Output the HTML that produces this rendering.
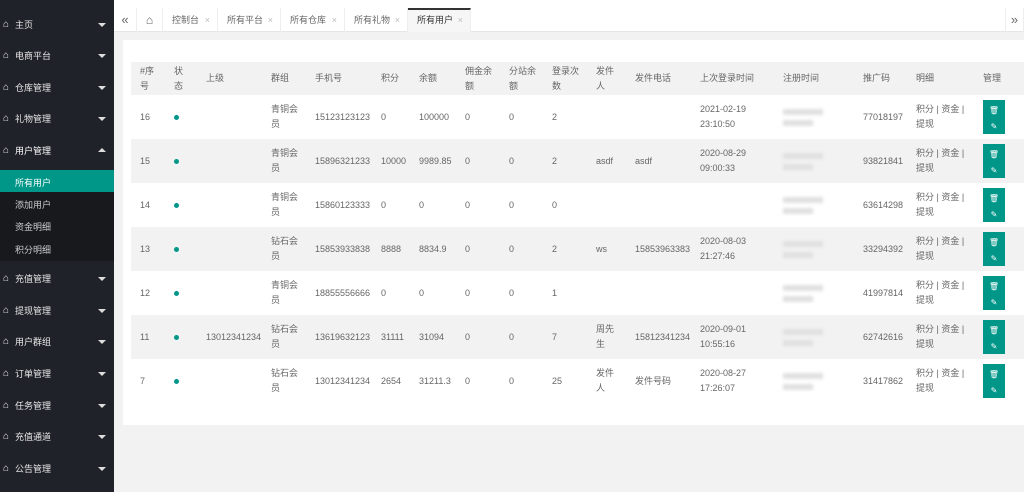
<!DOCTYPE html>
<html><head><meta charset="utf-8"><style>
*{margin:0;padding:0;box-sizing:border-box}
body{width:1024px;height:492px;overflow:hidden;background:#f2f2f2;font-family:"Liberation Sans","Noto Sans CJK SC",sans-serif;font-size:9px;color:#666;position:relative}
.side{position:absolute;left:0;top:0;width:114px;height:492px;background:#20222a;color:#ddd}
.it{position:absolute;left:0;width:114px;height:20px;line-height:20px;font-size:9px;color:#e8e8e8}
.it .h{position:absolute;left:3px;top:0;font-size:10px}
.it .t{position:absolute;left:15px}
.it .a{position:absolute;left:98px;top:8px;width:0;height:0;border-left:4px solid transparent;border-right:4px solid transparent;border-top:4px solid #ddd}
.it .u{border-top:none;border-bottom:4px solid #ddd;top:7px}
.sub{position:absolute;left:0;top:170px;width:114px;height:91px;background:#18191d}
.si{position:absolute;left:15px;font-size:9px;color:#ccc}
.top{position:absolute;left:114px;top:0;width:910px;height:8px;background:#fff}
.tabs{position:absolute;left:114px;top:8px;width:910px;height:24px;background:#fff;border-bottom:1px solid #e6e6e6}
.tab{position:absolute;top:0;height:24px;line-height:24px;border-right:1px solid #eee;font-size:9px;color:#666}
.tab .x{position:absolute;right:7px;color:#bbb}
.card{position:absolute;left:123px;top:40px;width:901px;height:385px;background:#fff}
table{position:absolute;left:131px;top:62px;border-collapse:collapse;table-layout:fixed}
td{padding-left:9px;font-size:9px;line-height:15px;color:#666;vertical-align:middle;height:44px}
tr.hd td{height:33px;background:#f2f2f2;color:#666}
tr.g td{background:#f2f2f2}
.dot{display:inline-block;width:5px;height:5px;border-radius:50%;background:#009688}
.bl{display:block;width:40px;height:6px;background:#e0e0e0;filter:blur(1.5px);margin:5px 0}
.btn{width:22px;height:34px;background:#009688;position:relative}
.btn span{position:absolute;left:0;width:22px;text-align:center;color:#fff;font-size:8px}
</style></head><body>
<div class="side">
<div class="it" style="top:15px"><span class="h">⌂</span><span class="t">主页</span><span class="a"></span></div>
<div class="it" style="top:46px"><span class="h">⌂</span><span class="t">电商平台</span><span class="a"></span></div>
<div class="it" style="top:78px"><span class="h">⌂</span><span class="t">仓库管理</span><span class="a"></span></div>
<div class="it" style="top:109px"><span class="h">⌂</span><span class="t">礼物管理</span><span class="a"></span></div>
<div class="it" style="top:141px"><span class="h">⌂</span><span class="t" style="color:#fff">用户管理</span><span class="a u"></span></div>
<div class="sub"></div>
<div style="position:absolute;left:0;top:170px;width:114px;height:22px;background:#009688"></div>
<div class="si" style="top:176px;color:#fff">所有用户</div>
<div class="si" style="top:198px">添加用户</div>
<div class="si" style="top:220px">资金明细</div>
<div class="si" style="top:243px">积分明细</div>
<div class="it" style="top:269px"><span class="h">⌂</span><span class="t">充值管理</span><span class="a"></span></div>
<div class="it" style="top:301px"><span class="h">⌂</span><span class="t">提现管理</span><span class="a"></span></div>
<div class="it" style="top:332px"><span class="h">⌂</span><span class="t">用户群组</span><span class="a"></span></div>
<div class="it" style="top:364px"><span class="h">⌂</span><span class="t">订单管理</span><span class="a"></span></div>
<div class="it" style="top:396px"><span class="h">⌂</span><span class="t">任务管理</span><span class="a"></span></div>
<div class="it" style="top:427px"><span class="h">⌂</span><span class="t">充值通道</span><span class="a"></span></div>
<div class="it" style="top:459px"><span class="h">⌂</span><span class="t">公告管理</span><span class="a"></span></div>
</div>
<div class="top"></div>
<div class="tabs">
<div class="tab" style="left:0;width:23px;text-align:center;font-size:13px;color:#666">«</div>
<div class="tab" style="left:23px;width:26px;text-align:center;font-size:12px">⌂</div>
<div class="tab" style="left:49px;width:55px;padding-left:9px">控制台<span class="x">×</span></div>
<div class="tab" style="left:104px;width:63px;padding-left:9px">所有平台<span class="x">×</span></div>
<div class="tab" style="left:167px;width:64px;padding-left:9px">所有仓库<span class="x">×</span></div>
<div class="tab" style="left:231px;width:63px;padding-left:9px">所有礼物<span class="x">×</span></div>
<div class="tab" style="left:294px;width:63px;padding-left:9px;background:#f6f6f6;border-top:2px solid #333;line-height:21px;color:#333">所有用户<span class="x">×</span></div>
<div class="tab" style="left:891px;width:19px;text-align:center;font-size:13px;border-left:1px solid #eee">»</div>
</div>
<div class="card"></div>
<table>
<colgroup><col style="width:34px"><col style="width:32px"><col style="width:65px"><col style="width:44px"><col style="width:66px"><col style="width:38px"><col style="width:46px"><col style="width:44px"><col style="width:43px"><col style="width:44px"><col style="width:39px"><col style="width:65px"><col style="width:83px"><col style="width:80px"><col style="width:53px"><col style="width:67px"><col style="width:50px"></colgroup>
<tr class="hd"><td>#序<br>号</td><td>状<br>态</td><td>上级</td><td>群组</td><td>手机号</td><td>积分</td><td>余额</td><td>佣金余<br>额</td><td>分站余<br>额</td><td>登录次<br>数</td><td>发件<br>人</td><td>发件电话</td><td>上次登录时间</td><td>注册时间</td><td>推广码</td><td>明细</td><td>管理</td></tr>
<tr><td>16</td><td><span class="dot"></span></td><td></td><td>青铜会<br>员</td><td>15123123123</td><td>0</td><td>100000</td><td>0</td><td>0</td><td>2</td><td></td><td></td><td>2021-02-19<br>23:10:50</td><td><span class="bl"></span><span class="bl" style="width:30px"></span></td><td>77018197</td><td>积分 | 资金 |<br>提现</td><td><div class="btn"><span style="top:3px">🗑</span><span style="top:19px">✎</span></div></td></tr>
<tr class="g"><td>15</td><td><span class="dot"></span></td><td></td><td>青铜会<br>员</td><td>15896321233</td><td>10000</td><td>9989.85</td><td>0</td><td>0</td><td>2</td><td>asdf</td><td>asdf</td><td>2020-08-29<br>09:00:33</td><td><span class="bl"></span><span class="bl" style="width:30px"></span></td><td>93821841</td><td>积分 | 资金 |<br>提现</td><td><div class="btn"><span style="top:3px">🗑</span><span style="top:19px">✎</span></div></td></tr>
<tr><td>14</td><td><span class="dot"></span></td><td></td><td>青铜会<br>员</td><td>15860123333</td><td>0</td><td>0</td><td>0</td><td>0</td><td>0</td><td></td><td></td><td></td><td><span class="bl"></span><span class="bl" style="width:30px"></span></td><td>63614298</td><td>积分 | 资金 |<br>提现</td><td><div class="btn"><span style="top:3px">🗑</span><span style="top:19px">✎</span></div></td></tr>
<tr class="g"><td>13</td><td><span class="dot"></span></td><td></td><td>钻石会<br>员</td><td>15853933838</td><td>8888</td><td>8834.9</td><td>0</td><td>0</td><td>2</td><td>ws</td><td>15853963383</td><td>2020-08-03<br>21:27:46</td><td><span class="bl"></span><span class="bl" style="width:30px"></span></td><td>33294392</td><td>积分 | 资金 |<br>提现</td><td><div class="btn"><span style="top:3px">🗑</span><span style="top:19px">✎</span></div></td></tr>
<tr><td>12</td><td><span class="dot"></span></td><td></td><td>青铜会<br>员</td><td>18855556666</td><td>0</td><td>0</td><td>0</td><td>0</td><td>1</td><td></td><td></td><td></td><td><span class="bl"></span><span class="bl" style="width:30px"></span></td><td>41997814</td><td>积分 | 资金 |<br>提现</td><td><div class="btn"><span style="top:3px">🗑</span><span style="top:19px">✎</span></div></td></tr>
<tr class="g"><td>11</td><td><span class="dot"></span></td><td>13012341234</td><td>钻石会<br>员</td><td>13619632123</td><td>31111</td><td>31094</td><td>0</td><td>0</td><td>7</td><td>周先<br>生</td><td>15812341234</td><td>2020-09-01<br>10:55:16</td><td><span class="bl"></span><span class="bl" style="width:30px"></span></td><td>62742616</td><td>积分 | 资金 |<br>提现</td><td><div class="btn"><span style="top:3px">🗑</span><span style="top:19px">✎</span></div></td></tr>
<tr><td>7</td><td><span class="dot"></span></td><td></td><td>钻石会<br>员</td><td>13012341234</td><td>2654</td><td>31211.3</td><td>0</td><td>0</td><td>25</td><td>发件<br>人</td><td>发件号码</td><td>2020-08-27<br>17:26:07</td><td><span class="bl"></span><span class="bl" style="width:30px"></span></td><td>31417862</td><td>积分 | 资金 |<br>提现</td><td><div class="btn"><span style="top:3px">🗑</span><span style="top:19px">✎</span></div></td></tr>
</table>
</body></html>
